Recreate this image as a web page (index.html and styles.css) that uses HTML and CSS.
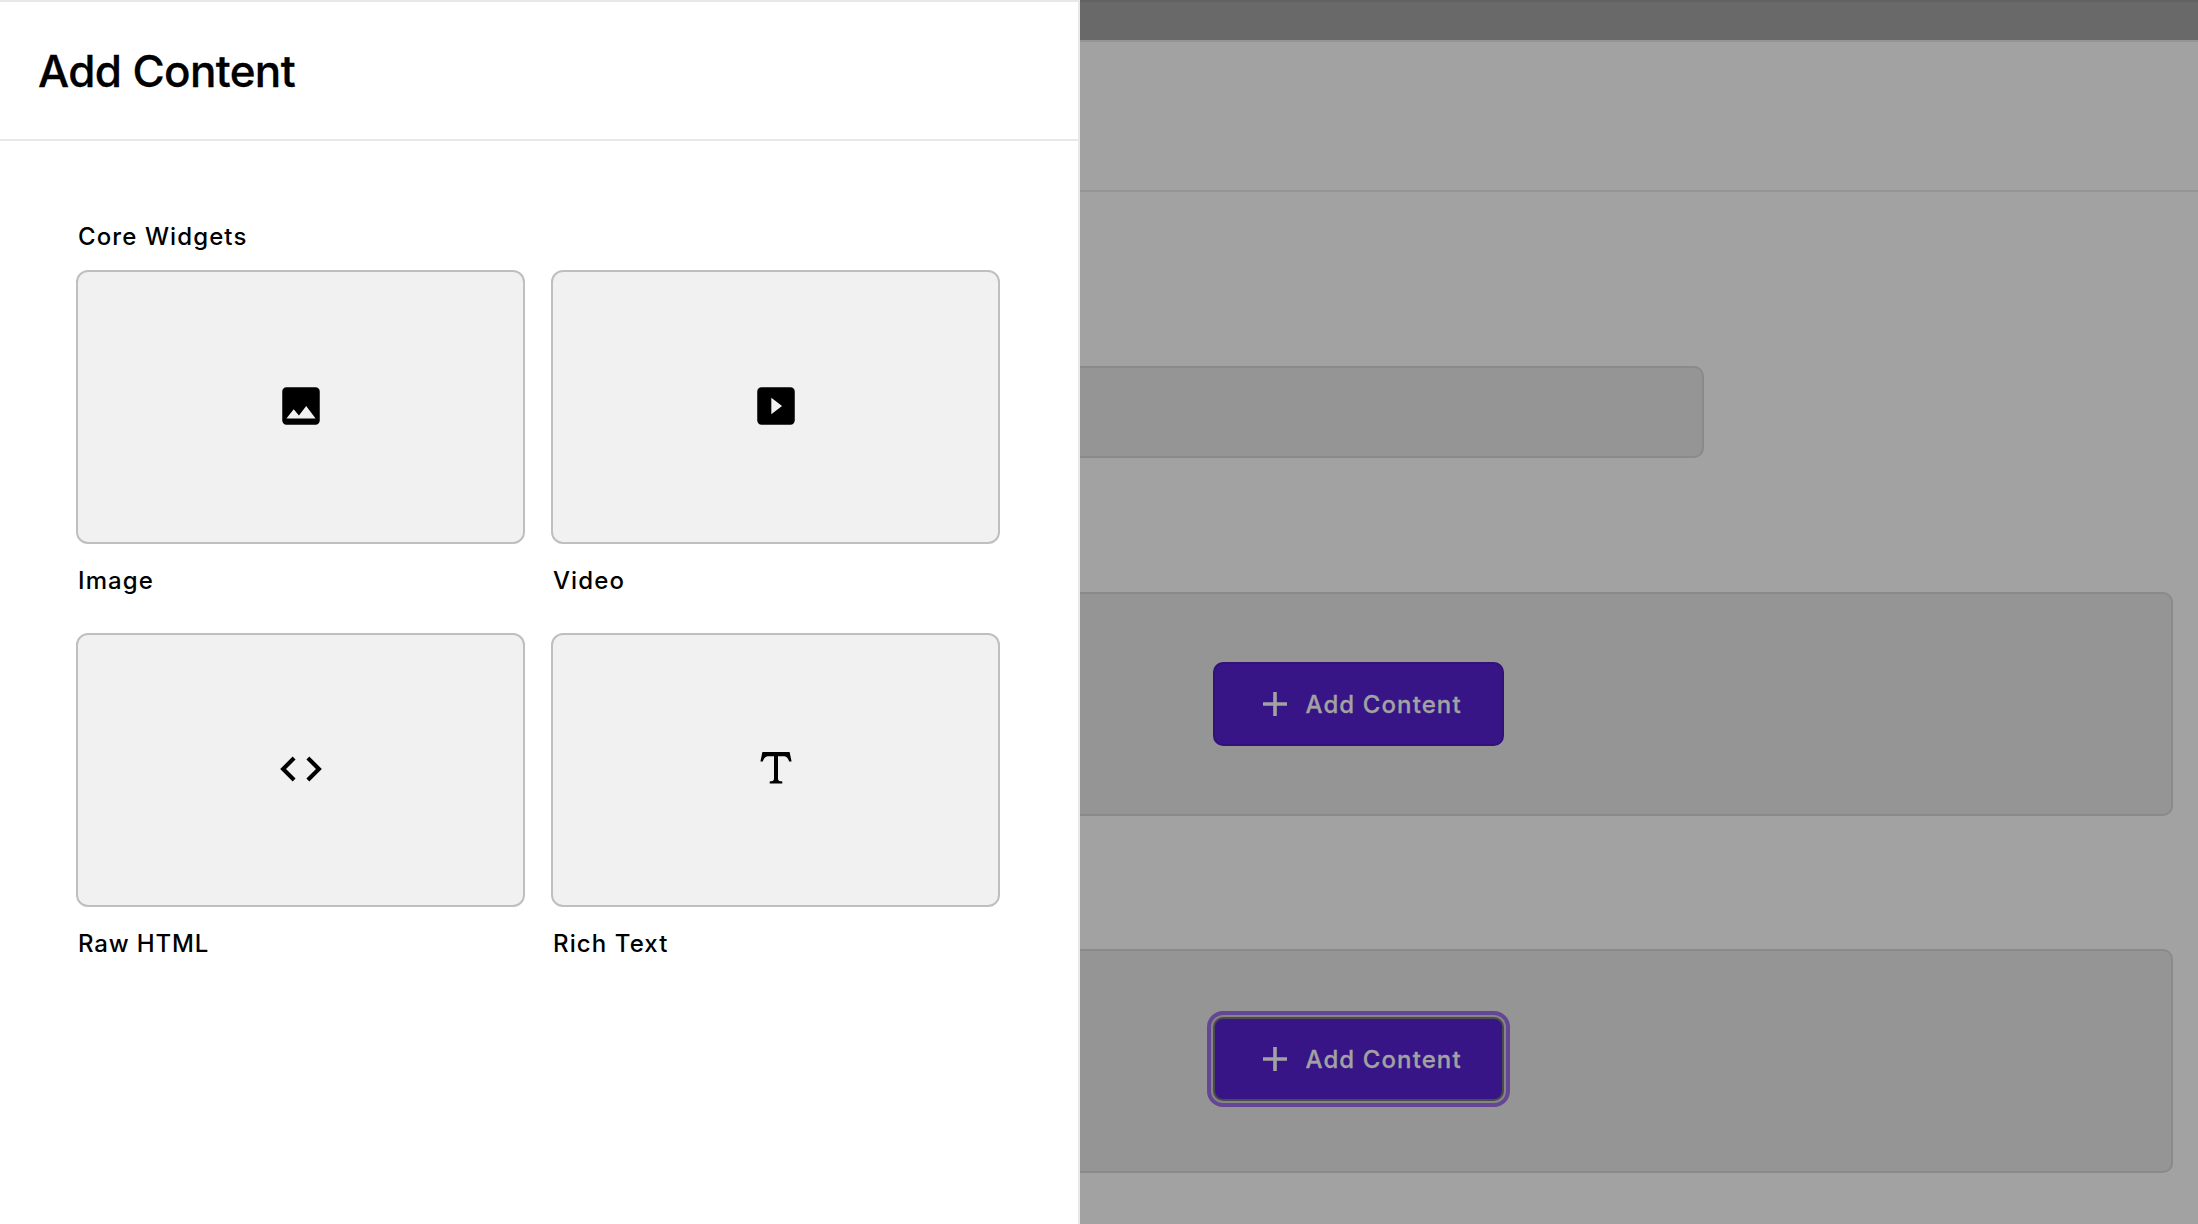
FILE: index.html
```html
<!DOCTYPE html>
<html lang="en">
<head>
<meta charset="utf-8">
<title>Add Content</title>
<link rel="stylesheet" href="styles.css">
</head>
<body>
<aside class="drawer">
  <header class="drawer-header"><h1 class="drawer-title">Add Content</h1></header>
  <section class="drawer-body">
    <h2 class="label group-title">Core Widgets</h2>
    <div class="widgets">
      <div class="widget">
        <div class="preview"><svg class="icon" viewBox="0 0 24 24"><path d="M21 19V5a2 2 0 0 0-2-2H5a2 2 0 0 0-2 2v14a2 2 0 0 0 2 2h14a2 2 0 0 0 2-2zM8.500 13.500l2.500 3.010L14.500 12l4.500 6H5l3.500-4.500z"/></svg></div>
        <div class="label">Image</div>
      </div>
      <div class="widget">
        <div class="preview"><svg class="icon" viewBox="0 0 24 24"><path fill-rule="evenodd" d="M5 3h14a2 2 0 0 1 2 2v14a2 2 0 0 1-2 2H5a2 2 0 0 1-2-2V5a2 2 0 0 1 2-2zM9.750 8v8l5.150-4z"/></svg></div>
        <div class="label">Video</div>
      </div>
      <div class="widget">
        <div class="preview"><svg class="icon" viewBox="0 0 24 24"><path d="M9.400 16.600L4.800 12l4.600-4.600L8 6l-6 6 6 6 1.400-1.400zm5.200 0l4.600-4.600-4.600-4.600L16 6l6 6-6 6-1.400-1.400z"/></svg></div>
        <div class="label label-wide">Raw HTML</div>
      </div>
      <div class="widget">
        <div class="preview preview-type"><svg class="icon-type" viewBox="0 0 32 32"><path d="M2.400 0H29.600L31.600 9.600H29.200C28 5.700 26.500 4.200 23 4.200H18V26.500C18 28.700 19 29.200 22.300 29.500V31.500H9.700V29.500C13 29.200 14 28.700 14 26.500V4.200H9C5.500 4.200 4 5.700 2.800 9.600H.4z"/></svg></div>
        <div class="label">Rich Text</div>
      </div>
    </div>
  </section>
</aside>
<main class="page">
  <div class="topbar"></div>
  <div class="page-header"></div>
  <div class="field"></div>
  <div class="panel">
    <button class="button"><svg class="plus" viewBox="0 0 24 24"><path d="M12 0v24M0 12h24"/></svg><span class="button-text">Add Content</span></button>
  </div>
  <div class="panel panel-second">
    <button class="button button-focused"><svg class="plus" viewBox="0 0 24 24"><path d="M12 0v24M0 12h24"/></svg><span class="button-text">Add Content</span></button>
  </div>
</main>
</body>
</html>
```
FILE: styles.css
```css
* { box-sizing: border-box; }
body {
  margin: 0;
  height: 1224px;
  display: flex;
  overflow: hidden;
  font-family: Inter, "Liberation Sans", sans-serif;
  color: #000;
}
.drawer {
  width: 1080px;
  flex: none;
  background: #fff;
  border-top: 2px solid #e8e8e8;
  border-right: 2px solid #e8e8e8;
}
.drawer-header {
  height: 139px;
  padding: 42px 38px 0;
  border-bottom: 2px solid #e8e8e8;
}
.drawer-title {
  margin: 0;
  font-size: 44px;
  line-height: 54px;
  font-weight: 500;
  letter-spacing: -0.65px;
  -webkit-text-stroke: 0.3px #000;
}
.drawer-body { padding: 81px 76px 0; }
.label {
  margin: 0;
  padding-left: 2px;
  font-size: 24px;
  line-height: 30px;
  font-weight: 500;
  letter-spacing: 1.1px;
}
.label-wide { letter-spacing: 0.85px; }
.group-title { margin-bottom: 18px; }
.widgets {
  display: grid;
  grid-template-columns: 449px 449px;
  column-gap: 26px;
  row-gap: 38px;
}
.widget { height: 325px; }
.preview {
  height: 274px;
  margin-bottom: 22px;
  padding-bottom: 2px;
  display: flex;
  align-items: center;
  justify-content: center;
  background: #f1f1f1;
  border: 2px solid #bfbfbf;
  border-radius: 12px;
}
.preview-type { padding-bottom: 4px; }
.icon { width: 50px; height: 50px; }
.icon-type { width: 32px; height: 32px; }
.page {
  flex: 1;
  min-width: 0;
  background: #a2a2a2;
}
.topbar {
  height: 42px;
  background: #696969;
  border-top: 2px solid #626262;
  border-bottom: 2px solid #959595;
}
.page-header { height: 150px; border-bottom: 2px solid #959595; }
.field {
  width: 624px;
  height: 92px;
  margin-top: 174px;
  background: #959595;
  border: 2px solid #8a8a8a;
  border-left: 0;
  border-radius: 0 10px 10px 0;
}
.panel {
  width: 1093px;
  height: 224px;
  margin-top: 134px;
  padding: 68px 0 0 133px;
  background: #959595;
  border: 2px solid #8a8a8a;
  border-left: 0;
  border-radius: 0 10px 10px 0;
}
.panel-second { margin-top: 133px; padding-top: 66px; }
.button {
  display: flex;
  align-items: center;
  width: 291px;
  height: 84px;
  padding: 0 0 0 48px;
  gap: 18.5px;
  background: #371587;
  border: 2px solid #321179;
  border-radius: 10px;
  font: 500 24px/30px Inter, "Liberation Sans", sans-serif;
  letter-spacing: 1.1px;
  color: #a2a2a2;
  white-space: nowrap;
}
.button-text { padding-top: 2px; -webkit-text-stroke: 0.3px #a2a2a2; }
.button-focused {
  border-color: #4c4c4c;
  box-shadow: 0 0 0 2px #858585, 0 0 0 6px #654596;
}
.plus { width: 24px; height: 24px; flex: none; fill: none; stroke: #a2a2a2; stroke-width: 3.6; }
```
